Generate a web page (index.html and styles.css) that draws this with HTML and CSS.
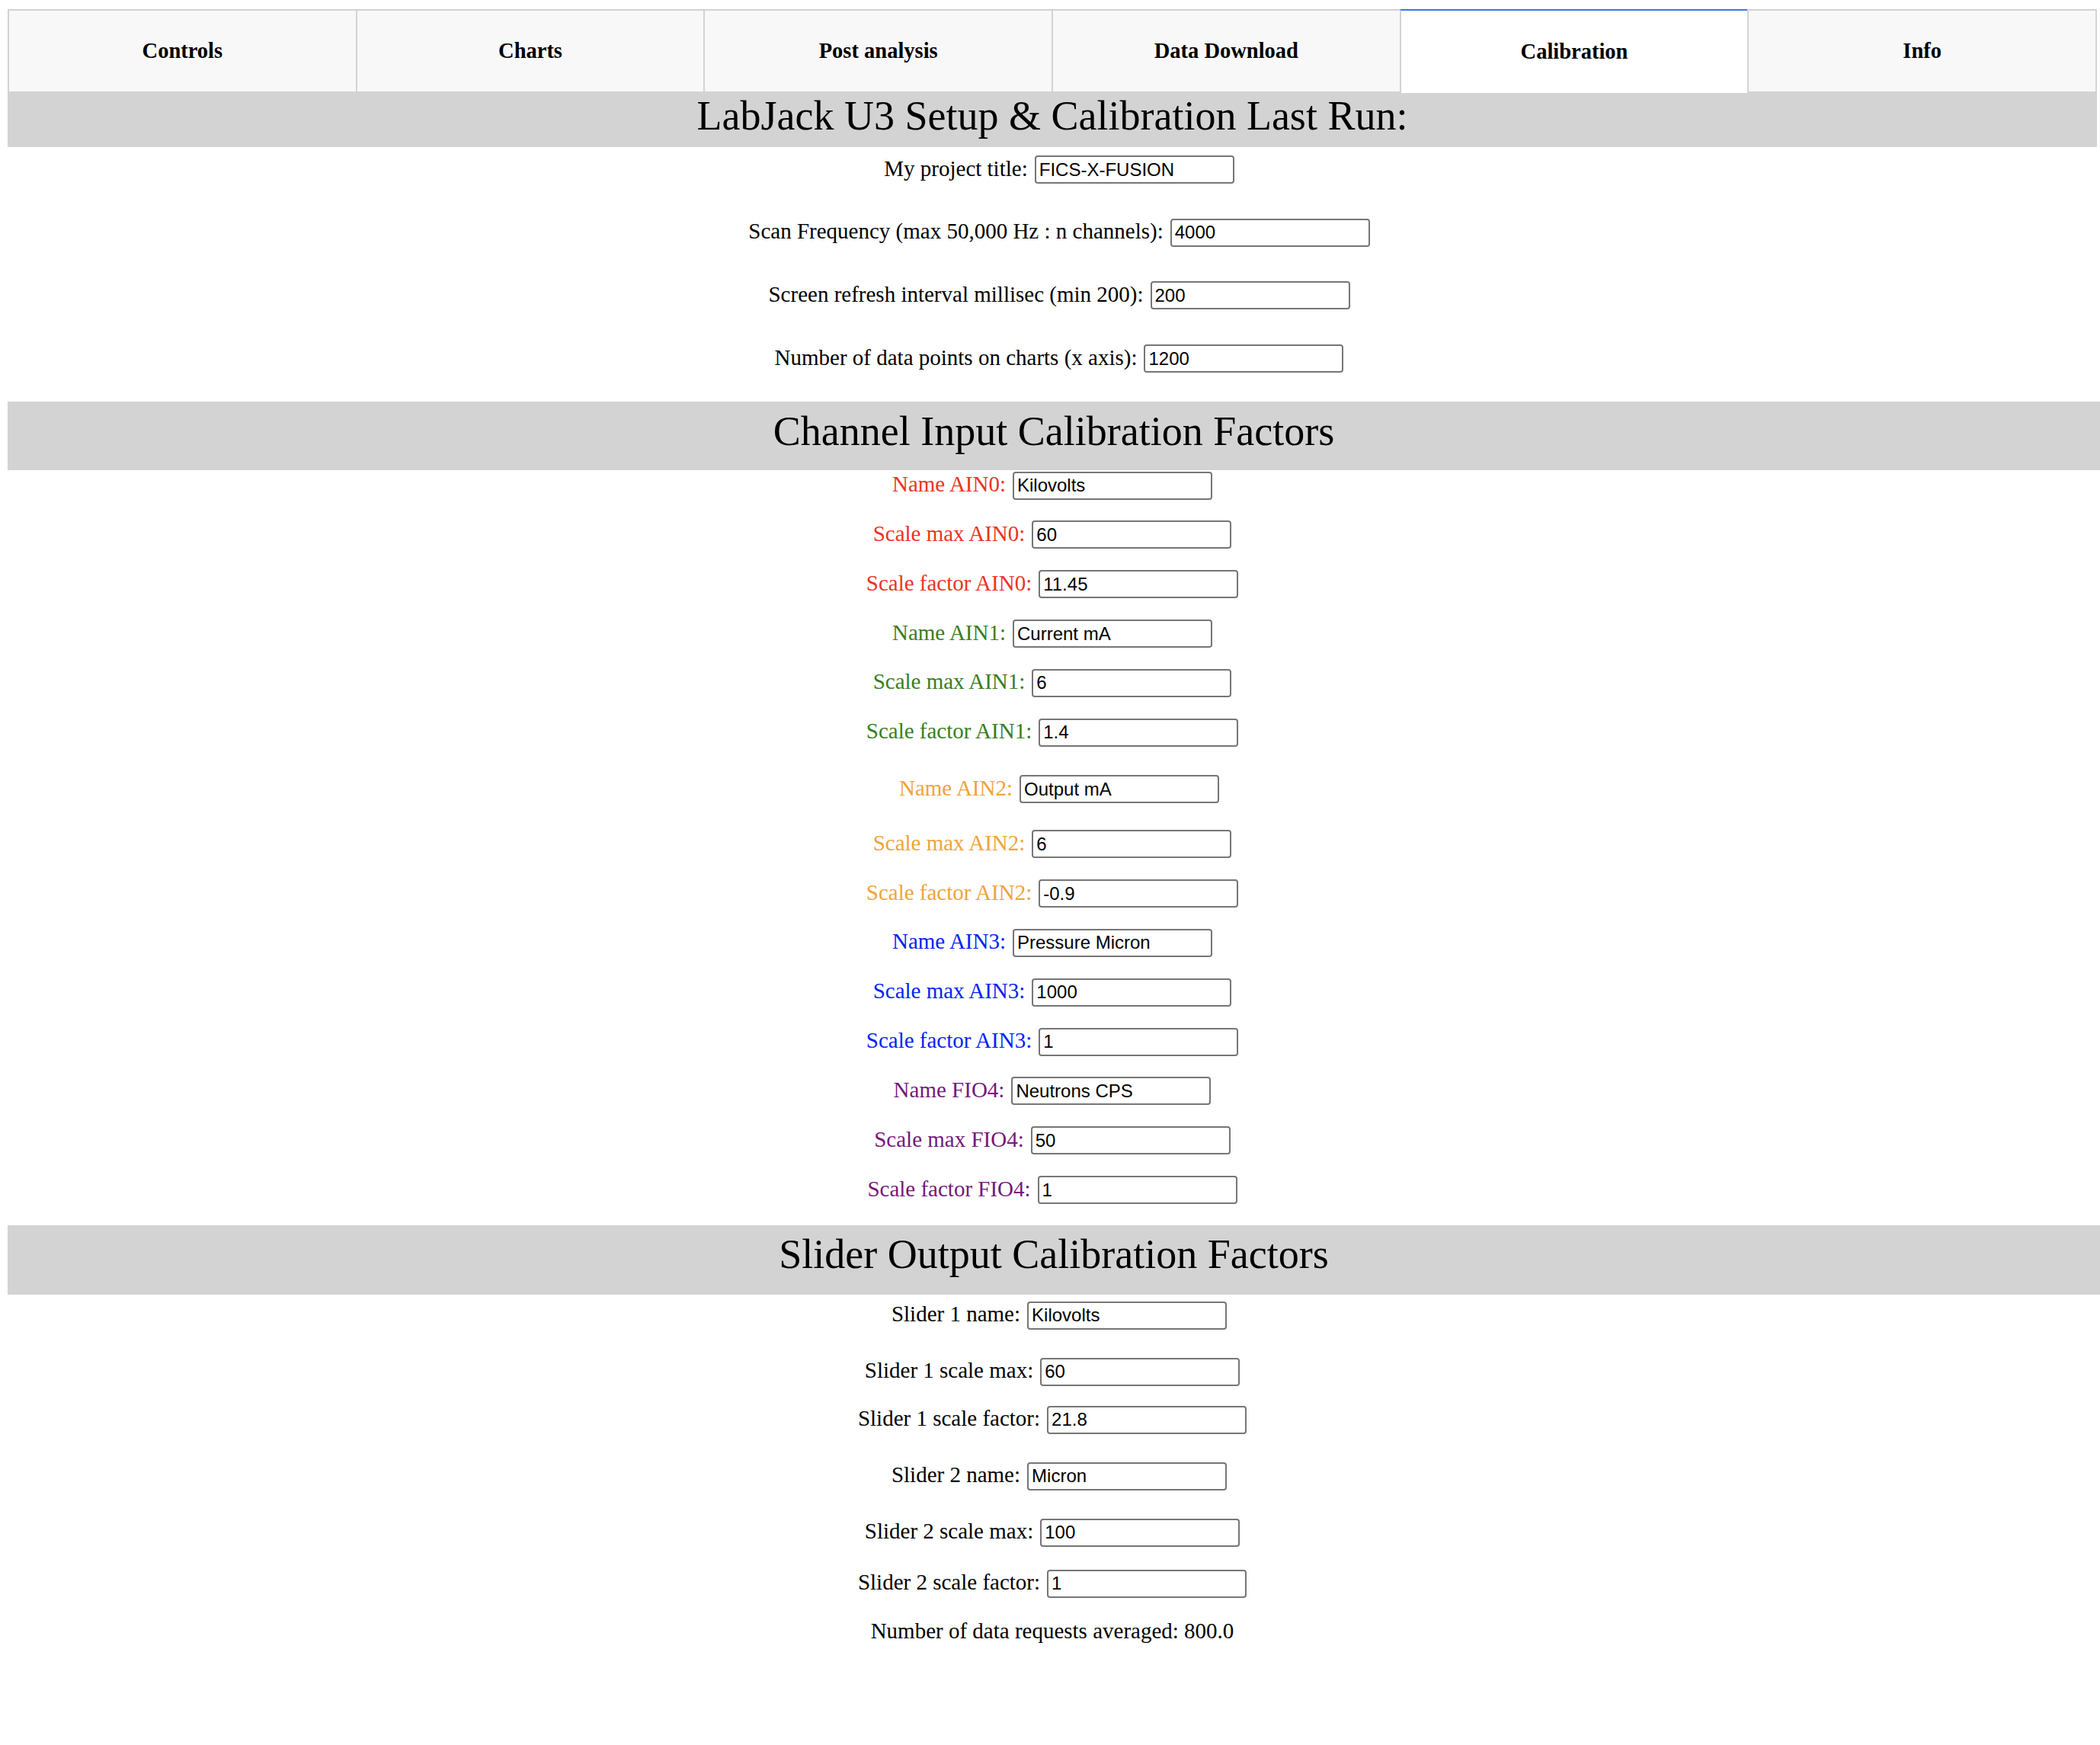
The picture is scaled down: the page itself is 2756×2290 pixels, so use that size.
FILE: index.html
```html
<!DOCTYPE html>
<html lang="en">
<head>
<meta charset="utf-8">
<title>LabJack U3 Calibration</title>
<link rel="stylesheet" href="styles.css">
</head>
<body>
<div class="page">
  <nav class="tabs">
    <div class="tab">Controls</div>
    <div class="tab">Charts</div>
    <div class="tab">Post analysis</div>
    <div class="tab">Data Download</div>
    <div class="tab active">Calibration</div>
    <div class="tab">Info</div>
  </nav>

  <h2 class="band band-top">LabJack U3 Setup &amp; Calibration Last Run:</h2>
  <section class="group group-setup">
    <div class="row shifted"><label>My project title:</label><input type="text" value="FICS-X-FUSION"></div>
    <div class="row shifted"><label>Scan Frequency (max 50,000 Hz : n channels):</label><input type="text" value="4000"></div>
    <div class="row shifted"><label>Screen refresh interval millisec (min 200):</label><input type="text" value="200"></div>
    <div class="row shifted"><label>Number of data points on charts (x axis):</label><input type="text" value="1200"></div>
  </section>

  <h2 class="band band-wide">Channel Input Calibration Factors</h2>
  <section class="group group-channels">
    <div class="row ch-red"><label>Name AIN0:</label><input type="text" value="Kilovolts"></div>
    <div class="row ch-red"><label>Scale max AIN0:</label><input type="text" value="60"></div>
    <div class="row ch-red"><label>Scale factor AIN0:</label><input type="text" value="11.45"></div>
    <div class="row ch-green"><label>Name AIN1:</label><input type="text" value="Current mA"></div>
    <div class="row ch-green"><label>Scale max AIN1:</label><input type="text" value="6"></div>
    <div class="row ch-green"><label>Scale factor AIN1:</label><input type="text" value="1.4"></div>
    <div class="row ch-orange shifted gap-a"><label>Name AIN2:</label><input type="text" value="Output mA"></div>
    <div class="row ch-orange gap-b"><label>Scale max AIN2:</label><input type="text" value="6"></div>
    <div class="row ch-orange"><label>Scale factor AIN2:</label><input type="text" value="-0.9"></div>
    <div class="row ch-blue"><label>Name AIN3:</label><input type="text" value="Pressure Micron"></div>
    <div class="row ch-blue"><label>Scale max AIN3:</label><input type="text" value="1000"></div>
    <div class="row ch-blue"><label>Scale factor AIN3:</label><input type="text" value="1"></div>
    <div class="row ch-purple"><label>Name FIO4:</label><input type="text" value="Neutrons CPS"></div>
    <div class="row ch-purple"><label>Scale max FIO4:</label><input type="text" value="50"></div>
    <div class="row ch-purple"><label>Scale factor FIO4:</label><input type="text" value="1"></div>
  </section>

  <h2 class="band band-wide band-last">Slider Output Calibration Factors</h2>
  <section class="group group-sliders">
    <div class="row shifted"><label>Slider 1 name:</label><input type="text" value="Kilovolts"></div>
    <div class="row gap-l"><label>Slider 1 scale max:</label><input type="text" value="60"></div>
    <div class="row"><label>Slider 1 scale factor:</label><input type="text" value="21.8"></div>
    <div class="row shifted gap-l"><label>Slider 2 name:</label><input type="text" value="Micron"></div>
    <div class="row gap-l"><label>Slider 2 scale max:</label><input type="text" value="100"></div>
    <div class="row gap-m"><label>Slider 2 scale factor:</label><input type="text" value="1"></div>
    <p class="summary">Number of data requests averaged: 800.0</p>
  </section>
</div>
</body>
</html>
```

FILE: styles.css
```css
html, body {
  margin: 0;
  padding: 0;
  background: #ffffff;
}

body {
  font-family: "Liberation Serif", "Times New Roman", serif;
  color: #000000;
}

.page {
  padding: 12px 4px 0 10px;
}

/* ---------- tabs ---------- */
.tabs {
  display: flex;
  height: 108px;
  align-items: flex-start;
}

.tab {
  flex: 1 1 0;
  height: 108px;
  box-sizing: border-box;
  display: flex;
  align-items: center;
  justify-content: center;
  background: #f8f8f8;
  border-top: 2px solid #d3d3d3;
  border-left: 2px solid #d3d3d3;
  font-weight: bold;
  font-size: 28.5px;
}

.tab:last-child {
  border-right: 2px solid #d3d3d3;
}

.tab.active {
  background: #ffffff;
  border-top-color: #3a78e6;
  height: 110px;
  position: relative;
  z-index: 1;
}

/* ---------- section bands ---------- */
.band {
  margin: 0;
  background: #d3d3d3;
  font-weight: normal;
  font-size: 54px;
  line-height: 62px;
  text-align: center;
}

.band-top {
  padding: 1px 0 10px;
}

.band-wide {
  margin-right: -4px;
  padding: 8px 0 20px;
}

.band-last {
  padding: 7px 0 22px;
}

/* ---------- rows ---------- */
.group {
  display: flex;
  flex-direction: column;
}

.group-setup {
  padding: 11px 0 37.5px;
  gap: 45.7px;
}

.group-channels {
  padding: 2px 0 27.6px;
  gap: 27.85px;
}

.group-sliders {
  padding: 9px 0 0;
  gap: 26px;
}

.row {
  display: flex;
  justify-content: center;
  align-items: baseline;
  gap: 9px;
}

.row label {
  font-size: 29px;
  line-height: 1;
}

.row input {
  width: 262px;
  height: 37px;
  box-sizing: border-box;
  margin: 0;
  padding: 0 4px;
  border: 2px solid #767676;
  border-radius: 4px;
  background: #ffffff;
  color: #000000;
  font-family: "Liberation Sans", Arial, sans-serif;
  font-size: 24px;
}

.row.shifted {
  padding-left: 18px;
}

.gap-a { margin-top: 9.4px; }
.gap-b { margin-top: 7.4px; }
.gap-l { margin-top: 11px; }
.gap-m { margin-top: 4px; }

.ch-red label { color: #eb3323; }
.ch-green label { color: #377e22; }
.ch-orange label { color: #f1a33b; }
.ch-blue label { color: #0023f5; }
.ch-purple label { color: #76177b; }

.summary {
  margin: 1px 0 0;
  text-align: center;
  font-size: 29px;
}
```
